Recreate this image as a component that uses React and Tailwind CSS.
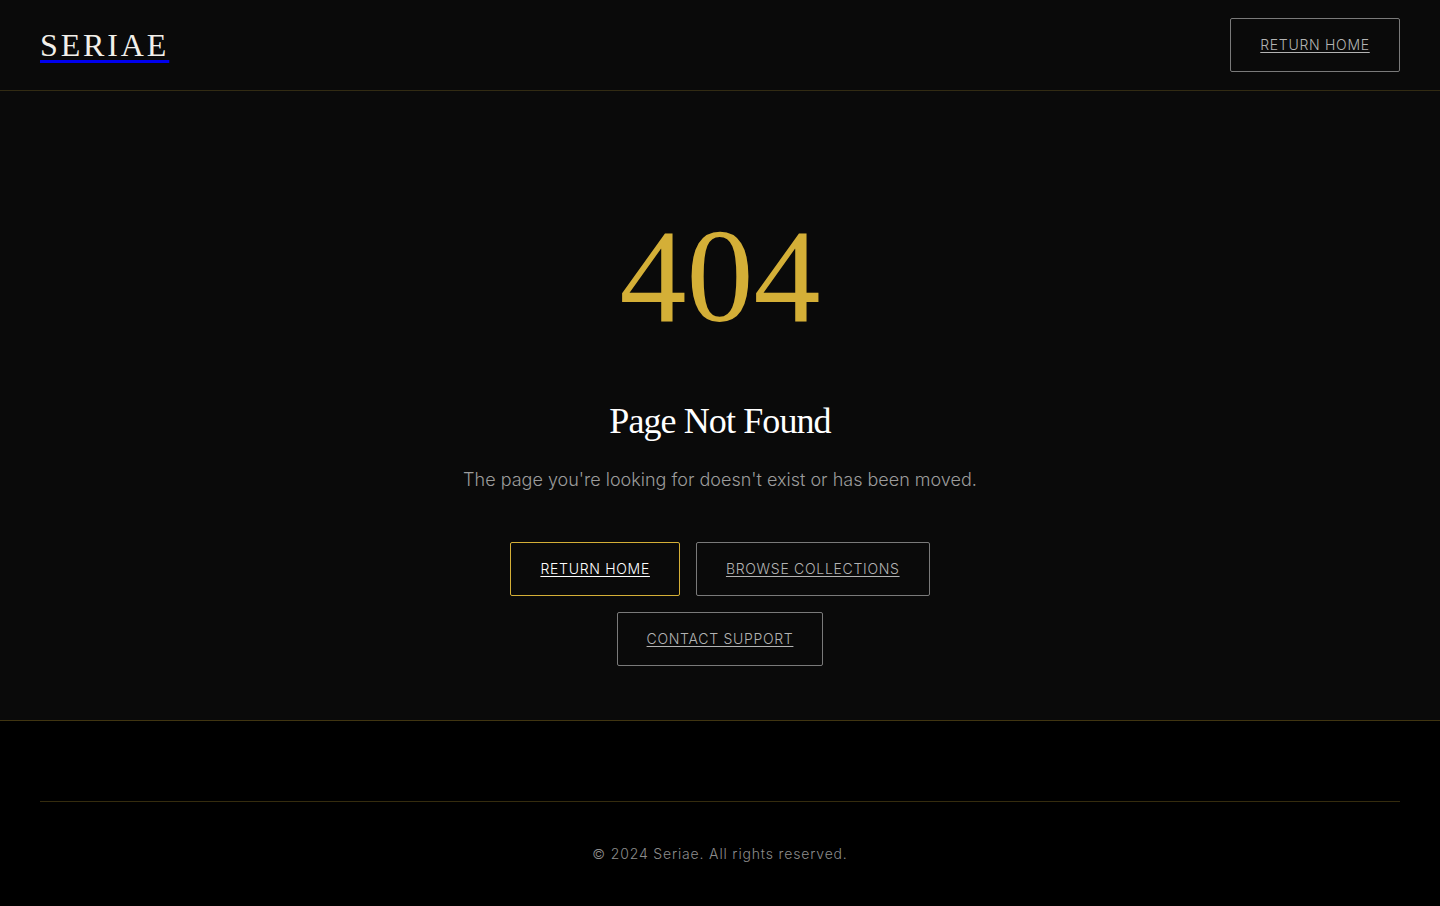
import React from 'react'

const serif = { fontFamily: '"Liberation Serif", "DejaVu Serif", serif' };

function OutlineButton({ children, gold }) {
  return (
    <a
      href="#"
      className={`inline-flex items-center justify-center h-[54px] px-[29px] border rounded-[2px] text-sm tracking-wider underline underline-offset-2 ${gold
        ? 'border-[#d4af37] text-white'
        : 'border-[#7a7a7a] text-[#b3b3b3]'
        }`}
    >
      {children}
    </a>
  );
}

export default function App() {
  return (
    <div className='flex flex-col min-h-screen bg-[#0a0a0a] font-light' style={{ fontFamily: 'Inter, "Liberation Sans", sans-serif' }}>
      {/* Header */}
      <header className='h-[91px] flex items-center justify-between px-10 border-b border-[#d4af37]/20'>
        <a href="#" className='text-[32px] leading-none tracking-[0.09em] text-[#f2f0ea] underline decoration-[#0000ee] decoration-[3px] underline-offset-[4px]' style={serif}>
          SERIAE
        </a>
        <a href="#" className='inline-flex items-center justify-center w-[170px] h-[54px] border border-[#7a7a7a] rounded-[2px] text-sm tracking-wider text-[#b3b3b3] underline underline-offset-2'>
          RETURN HOME
        </a>
      </header>

      {/* Main */}
      <main className='flex-grow flex flex-col items-center justify-center text-center pt-[64px]'>
        <h1 className='text-[134px] leading-none text-[#d4af37]' style={serif}>404</h1>
        <h2 className='mt-[56px] text-[36px] leading-tight text-white tracking-tight' style={serif}>Page Not Found</h2>
        <p className='mt-[22px] text-lg text-[#9c9c9c]'>The page you're looking for doesn't exist or has been moved.</p>
        <div className='mt-[48px] max-w-md flex flex-wrap justify-center gap-4'>
          <OutlineButton gold>RETURN HOME</OutlineButton>
          <OutlineButton>BROWSE COLLECTIONS</OutlineButton>
          <OutlineButton>CONTACT SUPPORT</OutlineButton>
        </div>
      </main>

      {/* Footer */}
      <footer className='bg-black border-t border-[#d4af37]/30 pt-20 px-10'>
        <div className='border-t border-[#d4af37]/25 pt-[42px] pb-[42px] text-center'>
          <p className='text-sm tracking-[0.06em] text-[#8c8c8c]'>© 2024 Seriae. All rights reserved.</p>
        </div>
      </footer>
    </div>
  )
}
